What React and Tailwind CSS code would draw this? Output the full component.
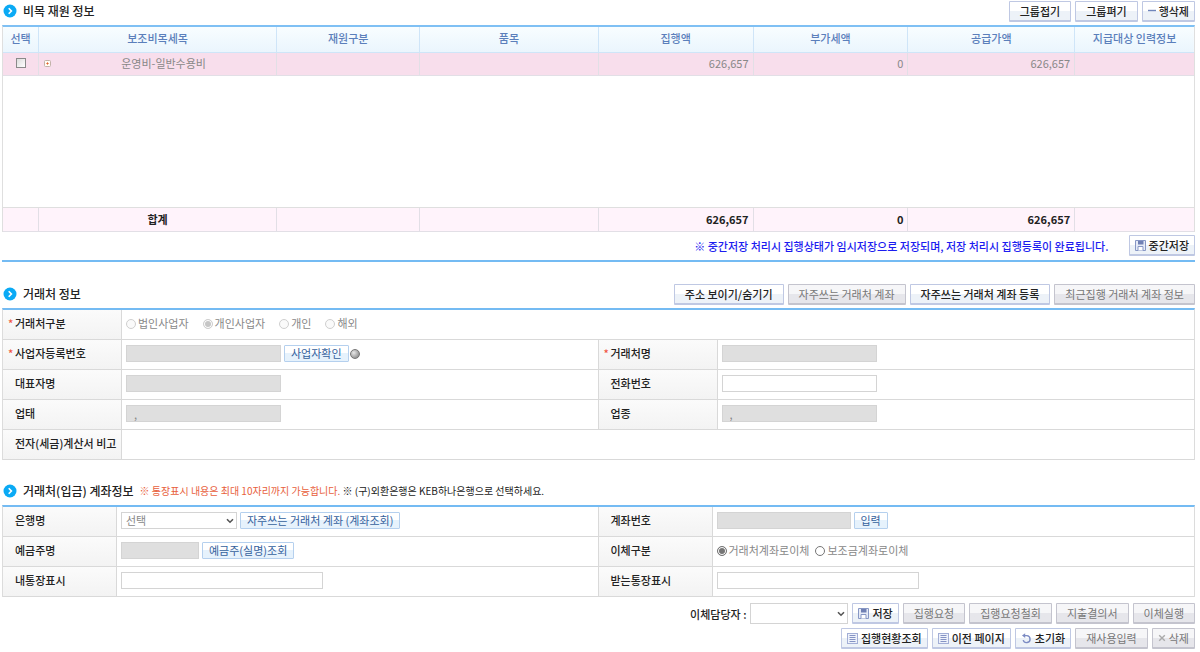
import { useState } from "react";
import clsx from "clsx";

const COLUMNS = ["보조비목세목", "재원구분", "품목", "집행액", "부가세액", "공급가액", "지급대상 인력정보"];

const ROWS = [{ item: "운영비-일반수용비", amount: "626,657", vat: "0", supply: "626,657" }];

const BIZ_TYPES = ["법인사업자", "개인사업자", "개인", "해외"];
const TRANSFER_TYPES = ["거래처계좌로이체", "보조금계좌로이체"];

const App = () => (
  <div className="bg-white pl-[2px] pr-[5px] pt-px text-[11px] leading-[16px] text-[#222] font-['Noto_Sans_CJK_KR',sans-serif]">
    <BudgetSection />
    <VendorSection />
    <AccountSection />
    <FooterActions />
  </div>
);

const BudgetSection = () => (
  <section className="border-b-2 border-[#74bbf3] pb-[4px]">
    <SectionHeader title="비목 재원 정보">
      <Button>그룹접기</Button>
      <Button>그룹펴기</Button>
      <Button icon={<MinusIcon />}>행삭제</Button>
    </SectionHeader>

    <table className="w-full table-fixed border-separate border-spacing-0 border-x border-t-2 border-x-[#dfdfdf] border-t-[#7fc0f4]">
      <colgroup>
        <col className="w-[36px]" />
        <col className="w-[20%]" />
        <col className="w-[12%]" />
        <col className="w-[15%]" />
        <col className="w-[13%]" />
        <col className="w-[13%]" />
        <col className="w-[14%]" />
        <col />
      </colgroup>
      <thead>
        <tr className="h-[26px] bg-linear-to-b from-[#f8fdff] to-[#eaf5fd] text-[#5b7fbb]">
          <HeadCell>선택</HeadCell>
          {COLUMNS.map((c) => (
            <HeadCell key={c}>{c}</HeadCell>
          ))}
        </tr>
      </thead>
      <tbody className="text-[#888]">
        {ROWS.map((r) => (
          <tr key={r.item} className="h-[23px] bg-[#f8deec]">
            <BodyCell className="text-center">
              <input
                type="checkbox"
                aria-label={`${r.item} 선택`}
                className="block mx-auto size-[10px] appearance-none border border-[#8a8a8a] bg-linear-to-br from-[#dcdcdc] to-white checked:bg-[#5277b5]"
              />
            </BodyCell>
            <BodyCell>
              <div className="flex items-center pl-[5px]">
                <button type="button" aria-label="펼치기">
                  <ExpandIcon />
                </button>
                <span className="flex-1 text-center">{r.item}</span>
              </div>
            </BodyCell>
            <BodyCell />
            <BodyCell />
            <BodyCell className="pr-[4px] text-right">{r.amount}</BodyCell>
            <BodyCell className="pr-[4px] text-right">{r.vat}</BodyCell>
            <BodyCell className="pr-[4px] text-right">{r.supply}</BodyCell>
            <BodyCell />
          </tr>
        ))}
        <tr className="h-[132px]">
          <td colSpan={8} className="border-b border-[#dfdfdf]" />
        </tr>
      </tbody>
      <tfoot>
        <tr className="h-[24px] bg-[#fff3fb] font-bold">
          <BodyCell />
          <BodyCell className="text-center">합계</BodyCell>
          <BodyCell />
          <BodyCell />
          <BodyCell className="pr-[4px] text-right">626,657</BodyCell>
          <BodyCell className="pr-[4px] text-right">0</BodyCell>
          <BodyCell className="pr-[4px] text-right">626,657</BodyCell>
          <BodyCell />
        </tr>
      </tfoot>
    </table>

    <div className="flex items-center justify-end gap-[20px] pt-[3px]">
      <p className="font-medium text-[#1c1cf0]">
        ※ 중간저장 처리시 집행상태가 임시저장으로 저장되며, 저장 처리시 집행등록이 완료됩니다.
      </p>
      <Button icon={<SaveIcon />}>중간저장</Button>
    </div>
  </section>
);

const VendorSection = () => {
  const [bizType, setBizType] = useState(BIZ_TYPES[1]);

  return (
    <section className="mt-[22px]">
      <SectionHeader title="거래처 정보">
        <Button>주소 보이기/숨기기</Button>
        <Button disabled>자주쓰는 거래처 계좌</Button>
        <Button>자주쓰는 거래처 계좌 등록</Button>
        <Button disabled>최근집행 거래처 계좌 정보</Button>
      </SectionHeader>

      <FormTable labelCol="w-[119px]">
        <tr>
          <LabelCell required>거래처구분</LabelCell>
          <FieldCell colSpan={3}>
            <div className="flex gap-[14px]">
              {BIZ_TYPES.map((t) => (
                <Radio key={t} name="bizType" label={t} checked={bizType === t} onChange={() => setBizType(t)} disabled />
              ))}
            </div>
          </FieldCell>
        </tr>
        <tr>
          <LabelCell required htmlFor="bizNo">사업자등록번호</LabelCell>
          <FieldCell>
            <TextBox id="bizNo" className="w-[155px]" disabled />
            <SmallButton>사업자확인</SmallButton>
            <span className="-ml-[2px] size-[10px] rounded-full border border-[#777] bg-radial-[at_35%_35%] from-[#e8e8e8] to-[#777]" />
          </FieldCell>
          <LabelCell required htmlFor="vendorName">거래처명</LabelCell>
          <FieldCell>
            <TextBox id="vendorName" className="w-[155px]" disabled />
          </FieldCell>
        </tr>
        <tr>
          <LabelCell htmlFor="ceo">대표자명</LabelCell>
          <FieldCell>
            <TextBox id="ceo" className="w-[155px]" disabled />
          </FieldCell>
          <LabelCell htmlFor="phone">전화번호</LabelCell>
          <FieldCell>
            <TextBox id="phone" className="w-[155px]" />
          </FieldCell>
        </tr>
        <tr>
          <LabelCell htmlFor="bizStatus">업태</LabelCell>
          <FieldCell>
            <TextBox id="bizStatus" className="w-[155px]" defaultValue="," disabled />
          </FieldCell>
          <LabelCell htmlFor="bizItem">업종</LabelCell>
          <FieldCell>
            <TextBox id="bizItem" className="w-[155px]" defaultValue="," disabled />
          </FieldCell>
        </tr>
        <tr>
          <LabelCell>전자(세금)계산서 비고</LabelCell>
          <FieldCell colSpan={3} />
        </tr>
      </FormTable>
    </section>
  );
};

const AccountSection = () => {
  const [transfer, setTransfer] = useState(TRANSFER_TYPES[0]);

  return (
    <section className="mt-[21px]">
      <SectionHeader
        title="거래처(입금) 계좌정보"
        note={
          <p className="text-[10px]">
            <span className="text-[#e8603c]">※ 통장표시 내용은 최대 10자리까지 가능합니다.</span> ※ (구)외환은행은
            KEB하나은행으로 선택하세요.
          </p>
        }
      />

      <FormTable labelCol="w-[114px]">
        <tr>
          <LabelCell htmlFor="bank">은행명</LabelCell>
          <FieldCell>
            <Select id="bank" className="w-[116px]" boxClass="h-[17px]">
              <option>선택</option>
            </Select>
            <SmallButton>자주쓰는 거래처 계좌 (계좌조회)</SmallButton>
          </FieldCell>
          <LabelCell htmlFor="accountNo">계좌번호</LabelCell>
          <FieldCell>
            <TextBox id="accountNo" className="w-[134px]" disabled />
            <SmallButton>입력</SmallButton>
          </FieldCell>
        </tr>
        <tr>
          <LabelCell htmlFor="holder">예금주명</LabelCell>
          <FieldCell>
            <TextBox id="holder" className="w-[78px]" disabled />
            <SmallButton>예금주(실명)조회</SmallButton>
          </FieldCell>
          <LabelCell>이체구분</LabelCell>
          <FieldCell>
            <div className="flex gap-[6px]">
              {TRANSFER_TYPES.map((t) => (
                <Radio key={t} name="transfer" label={t} checked={transfer === t} onChange={() => setTransfer(t)} />
              ))}
            </div>
          </FieldCell>
        </tr>
        <tr>
          <LabelCell htmlFor="myMemo">내통장표시</LabelCell>
          <FieldCell>
            <TextBox id="myMemo" className="w-[202px]" />
          </FieldCell>
          <LabelCell htmlFor="theirMemo">받는통장표시</LabelCell>
          <FieldCell>
            <TextBox id="theirMemo" className="w-[202px]" />
          </FieldCell>
        </tr>
      </FormTable>
    </section>
  );
};

const FooterActions = () => (
  <footer className="mt-[6px] flex flex-col gap-[4px]">
    <div className="flex items-center justify-end gap-[4px]">
      <label htmlFor="manager" className="font-medium">이체담당자 :</label>
      <Select id="manager" className="w-[98px]" boxClass="h-[21px]">
        <option></option>
      </Select>
      <Button icon={<SaveIcon />}>저장</Button>
      <Button disabled>집행요청</Button>
      <Button disabled>집행요청철회</Button>
      <Button disabled>지출결의서</Button>
      <Button disabled>이체실행</Button>
    </div>
    <div className="flex items-center justify-end gap-[4px]">
      <Button icon={<ListIcon />}>집행현황조회</Button>
      <Button icon={<ListIcon />}>이전 페이지</Button>
      <Button icon={<ResetIcon />}>초기화</Button>
      <Button disabled>재사용입력</Button>
      <Button disabled icon={<CrossIcon />}>삭제</Button>
    </div>
  </footer>
);

/* ---------- shared pieces ---------- */

const SectionHeader = ({ title, note, children }) => (
  <header className="flex h-[24px] items-start justify-between">
    <div className="flex h-[20px] items-center gap-[6px]">
      <BulletIcon />
      <h2 className="pb-px text-[12px] font-medium">{title}</h2>
      {note}
    </div>
    <div className="flex gap-[4px]">{children}</div>
  </header>
);

const Button = ({ icon, disabled, children }) => (
  <button
    type="button"
    disabled={disabled}
    className={clsx(
      "flex h-[21px] items-center gap-[3px] whitespace-nowrap rounded-[1px] border border-b-2 bg-linear-to-b from-50% to-50%",
      icon ? "px-[5px]" : "px-[10px]",
      disabled
        ? "border-[#c4c4ce] from-[#f6f6f8] to-[#e6e6eb] text-[#777]"
        : "border-[#bfc8e3] from-white to-[#edf2f8] font-medium text-[#222]"
    )}
  >
    {icon}
    <span className="pb-px">{children}</span>
  </button>
);

const SmallButton = ({ children }) => (
  <button
    type="button"
    className="flex h-[17px] items-center whitespace-nowrap rounded-[1px] border border-[#b5d0ee] bg-linear-to-b from-white from-50% to-[#e6f2fc] to-50% px-[6px] pb-[2px] text-[#35619c]"
  >
    {children}
  </button>
);

const HeadCell = ({ children }) => (
  <th className="border-b border-r border-[#cfe5f8] pb-[4px] font-medium last:border-r-0">{children}</th>
);

const BodyCell = ({ className, children }) => (
  <td className={clsx("border-b border-r border-[#e2dfe6] pb-[2px] last:border-r-0", className)}>{children}</td>
);

const FormTable = ({ labelCol, children }) => (
  <table className="w-full table-fixed border-separate border-spacing-0 border-x border-t-2 border-x-[#dcdcdc] border-t-[#74bbf3]">
    <colgroup>
      <col className={labelCol} />
      <col />
      <col className={labelCol} />
      <col />
    </colgroup>
    <tbody>{children}</tbody>
  </table>
);

const LabelCell = ({ required, htmlFor, children }) => {
  const Tag = htmlFor ? "label" : "span";
  return (
    <th
      scope="row"
      className="h-[30px] whitespace-nowrap border-b border-r border-[#d9d9d9] bg-linear-to-b from-[#fbfbfb] to-[#f3f3f3] pb-[4px] text-left font-medium"
    >
      <div className="flex pl-[5px]">
        <span className="w-[7px] text-[#f0553f]">{required && "*"}</span>
        <Tag htmlFor={htmlFor}>{children}</Tag>
      </div>
    </th>
  );
};

const FieldCell = ({ colSpan, children }) => (
  <td colSpan={colSpan} className="h-[30px] border-b border-r border-[#d9d9d9] pb-[2px] last:border-r-0">
    <div className="flex items-center gap-[3px] pl-[4px]">{children}</div>
  </td>
);

const TextBox = ({ className, ...props }) => (
  <input
    type="text"
    className={clsx(
      "h-[17px] border border-[#d4d4d4] bg-white px-[7px] text-[#888] disabled:bg-[#dfdfdf]",
      className
    )}
    {...props}
  />
);

const Select = ({ className, boxClass, children, ...props }) => (
  <div className={clsx("relative", className)}>
    <select
      className={clsx(
        "block w-full appearance-none border border-[#d4d4d4] bg-white pb-[2px] pl-[4px] leading-[14px] text-[#888]",
        boxClass
      )}
      {...props}
    >
      {children}
    </select>
    <svg viewBox="0 0 8 6" className="pointer-events-none absolute right-[3px] top-1/2 h-[6px] w-[8px] -translate-y-1/2">
      <path d="M1 1.2 4 4.2 7 1.2" fill="none" stroke="#555" strokeWidth="1.6" />
    </svg>
  </div>
);

const Radio = ({ label, ...props }) => (
  <label className="flex items-center gap-[2px] text-[#888]">
    <input
      type="radio"
      className="size-[10px] appearance-none rounded-full border border-[#767676] bg-white checked:bg-[#767676] checked:shadow-[inset_0_0_0_1px_#fff] disabled:border-[#cfcfcf] disabled:bg-[#fafafa] disabled:checked:bg-[#c6c6c6]"
      {...props}
    />
    <span className="pb-px">{label}</span>
  </label>
);

/* ---------- icons ---------- */

const BulletIcon = () => (
  <svg viewBox="0 0 14 14" className="ml-px size-[14px]">
    <circle cx="7" cy="7" r="6.5" fill="#0aaaf5" />
    <path d="M5.7 4.3 8.4 7 5.7 9.7" fill="none" stroke="#fff" strokeWidth="1.6" />
  </svg>
);

const ExpandIcon = () => (
  <svg viewBox="0 0 7 7" className="block size-[7px]">
    <rect x=".5" y=".5" width="6" height="6" rx="1" fill="#fffdf5" stroke="#c3b3aa" />
    <path d="M3.5 2.4v2.2M2.4 3.5h2.2" stroke="#e0602c" />
  </svg>
);

const MinusIcon = () => (
  <svg viewBox="0 0 8 8" className="size-[8px]">
    <path d="M0 3.5h8" stroke="#6f86bb" strokeWidth="1.4" />
  </svg>
);

const SaveIcon = () => (
  <svg viewBox="0 0 11 11" className="size-[11px]">
    <path d="M.5.5h10v10H.5z" fill="#e6ebf7" stroke="#8797c5" />
    <path d="M3 1h5.5v3.5H3z" fill="#7080b4" />
    <path d="M3 10.5v-4h5v4" fill="#fff" stroke="#8797c5" />
  </svg>
);

const ListIcon = () => (
  <svg viewBox="0 0 11 11" className="size-[11px]">
    <rect x=".5" y=".5" width="10" height="10" fill="#eef2fb" stroke="#a2aed6" />
    <path d="M2.5 2.5h6M2.5 4.5h6M2.5 6.5h6M2.5 8.5h6" stroke="#8593c4" />
  </svg>
);

const ResetIcon = () => (
  <svg viewBox="0 0 11 11" className="size-[11px]">
    <path d="M3.6 2.6h2.2a3.5 3.5 0 1 1-3.6 4.5" fill="none" stroke="#7c8bc3" strokeWidth="1.4" />
    <path d="M1 2.6 4.2.3v4.8z" fill="#7c8bc3" />
  </svg>
);

const CrossIcon = () => (
  <svg viewBox="0 0 8 8" className="size-[8px]">
    <path d="m1.2 1.2 5.6 5.6m0-5.6L1.2 6.8" stroke="#aaa" strokeWidth="1.4" />
  </svg>
);

export default App;
